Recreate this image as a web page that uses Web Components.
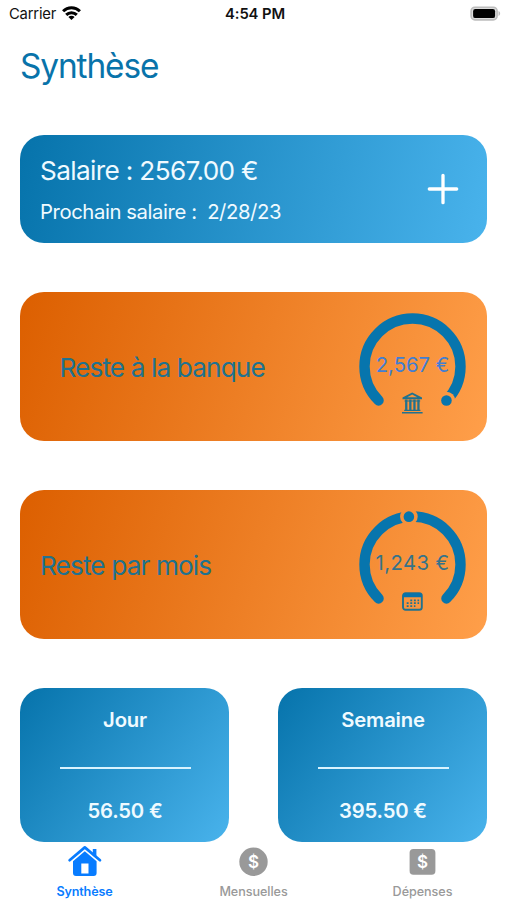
<!DOCTYPE html>
<html lang="fr">
<head>
<meta charset="utf-8">
<title>Synthèse</title>
<style>
  body {
    margin: 0;
    background: #fff;
    font-family: Inter, "Liberation Sans", sans-serif;
  }
</style>
</head>
<body>
<budget-app>
  <status-bar slot="status" carrier="Carrier" time="4:54 PM"></status-bar>
  <salary-card amount="2567.00 €" next="2/28/23"></salary-card>
  <gauge-card label="Reste à la banque" value="2,567 €" rate="1" icon="bank" class="inset"></gauge-card>
  <gauge-card label="Reste par mois" value="1,243 €" rate="0.484" icon="calendar"></gauge-card>
  <div class="pair">
    <amount-card label="Jour">56.50 €</amount-card>
    <amount-card label="Semaine">395.50 €</amount-card>
  </div>
  <tab-item slot="tabs" icon="house" selected>Synthèse</tab-item>
  <tab-item slot="tabs" icon="circle">Mensuelles</tab-item>
  <tab-item slot="tabs" icon="square">Dépenses</tab-item>
</budget-app>

<script>
const createTemplate = (html) => {
  const template = document.createElement('template');
  template.innerHTML = html;
  return template;
};

const render = (el, template) => {
  el.attachShadow({ mode: 'open' });
  el.shadowRoot.appendChild(template.content.cloneNode(true));
};

const appTemplate = createTemplate(`
  <style>
    :host {
      display: flex;
      flex-direction: column;
      box-sizing: border-box;
      width: 507px;
      height: 900px;
      overflow: hidden;
    }
    h1 {
      margin: 19px 0 0 20px;
      height: 41px;
      font-size: 33.4px;
      line-height: 41px;
      font-weight: 400;
      letter-spacing: -1.1px;
      color: #0873aa;
    }
    main {
      display: flex;
      flex-direction: column;
      gap: 49px;
      padding: 48px 20px 0 20px;
    }
    ::slotted(.pair) {
      display: grid;
      grid-template-columns: 1fr 1fr;
      gap: 49px;
    }
    nav {
      display: grid;
      grid-template-columns: repeat(3, 1fr);
      padding-top: 4px;
    }
  </style>
  <slot name="status"></slot>
  <h1>Synthèse</h1>
  <main><slot></slot></main>
  <nav><slot name="tabs"></slot></nav>
`);

class BudgetApp extends HTMLElement {
  constructor() {
    super();
    render(this, appTemplate);
  }
}

const statusTemplate = createTemplate(`
  <style>
    :host {
      display: grid;
      grid-template-columns: 1fr auto 1fr;
      align-items: center;
      height: 27px;
      padding: 0 6px 0 9px;
      box-sizing: border-box;
      font-size: 14.8px;
      color: #111;
    }
    .left {
      display: flex;
      align-items: center;
      gap: 6px;
    }
    .carrier {
      letter-spacing: -0.2px;
    }
    .time {
      font-weight: 600;
      letter-spacing: -0.1px;
    }
    .battery {
      justify-self: end;
    }
    svg {
      display: block;
    }
  </style>
  <div class="left">
    <span class="carrier"></span>
    <svg width="19" height="15" viewBox="0 0 19 15" fill="none" stroke="#000" stroke-width="3">
      <path d="M1.1 5.3a12 12 0 0 1 16.8 0"/>
      <path d="M4.2 8.9a7.5 7.5 0 0 1 10.6 0"/>
      <path d="M9.5 14 6.4 11a4.4 4.4 0 0 1 6.2 0z" fill="#000" stroke="none"/>
    </svg>
  </div>
  <span class="time"></span>
  <svg class="battery" width="31" height="16" viewBox="0 0 31 16">
    <rect x="1.1" y="1.3" width="26" height="12.6" rx="3.8" fill="#ddd" stroke="#bdbdbd" stroke-width="1.6"/>
    <rect x="3.1" y="3.1" width="22" height="9" rx="2.2"/>
    <path d="M28.5 5.1c2.2.8 2.2 4 0 4.8z" fill="#bdbdbd"/>
  </svg>
`);

class StatusBar extends HTMLElement {
  constructor() {
    super();
    render(this, statusTemplate);
  }

  connectedCallback() {
    this.shadowRoot.querySelector('.carrier').textContent = this.getAttribute('carrier');
    this.shadowRoot.querySelector('.time').textContent = this.getAttribute('time');
  }
}

const salaryTemplate = createTemplate(`
  <style>
    :host {
      display: flex;
      align-items: center;
      justify-content: space-between;
      box-sizing: border-box;
      height: 108px;
      padding: 0 28.3px 0 20px;
      border-radius: 24px;
      background: linear-gradient(103deg, #0673ab, #49b3ec);
      color: #effaff;
    }
    .salary {
      font-size: 26.2px;
      line-height: 34px;
      letter-spacing: -0.65px;
    }
    .next {
      margin-top: 11px;
      font-size: 20.3px;
      line-height: 26px;
      letter-spacing: -0.41px;
      white-space: pre;
    }
  </style>
  <div>
    <div class="salary"></div>
    <div class="next"></div>
  </div>
  <svg width="32" height="32" viewBox="0 0 32 32" stroke="#fff" stroke-width="3.3" stroke-linecap="round">
    <path d="M16 2.3v27.4M2.3 16h27.4"/>
  </svg>
`);

class SalaryCard extends HTMLElement {
  constructor() {
    super();
    render(this, salaryTemplate);
  }

  connectedCallback() {
    this.shadowRoot.querySelector('.salary').textContent = `Salaire : ${this.getAttribute('amount')}`;
    this.shadowRoot.querySelector('.next').textContent = `Prochain salaire :  ${this.getAttribute('next')}`;
  }
}

const gaugeIcons = {
  bank: `
    <g transform="translate(43 79.4)" fill="#20728f">
      <path fill-rule="evenodd" d="M10.2 0 20 5v1.8H.5V5zM10.2 2.1 5.2 4.9h10z"/>
      <path d="M2.5 8h15.7v1.2H2.5zM2.2 17.3h16.2v1.3H2.2zM0 19.5h20.6v1.7H0z"/>
      <path d="M3.1 7h2.3v11H3.1zM7.2 7h2.3v11H7.2zM11.3 7h2.3v11h-2.3zM15.3 7h2.3v11h-2.3z"/>
    </g>`,
  calendar: `
    <g transform="translate(43 81.2)">
      <rect x="1" y="1" width="18.8" height="16.6" rx="2.6" fill="none" stroke="#20728f" stroke-width="1.9"/>
      <path d="M1 5V3.2Q1 1 3.2 1h14.4q2.2 0 2.2 2.2V5z" fill="#0873aa"/>
      <path d="M8.3 8.1h8.8M4.7 11h12.4M4.7 13.9h8.7" stroke="#20728f" stroke-width="1.7" stroke-dasharray="1.9 1.7"/>
    </g>`
};

const gaugeTemplate = createTemplate(`
  <style>
    :host {
      display: flex;
      align-items: center;
      justify-content: space-between;
      box-sizing: border-box;
      height: 149px;
      padding: 0 20.7px 0 20px;
      border-radius: 24px;
      background: linear-gradient(107.7deg, #dc5f00, #ff9f4a);
      color: #20728f;
    }
    :host(.inset) {
      padding-left: 39.5px;
    }
    .label {
      padding-top: 1px;
      font-size: 26.2px;
      letter-spacing: -0.88px;
    }
    svg {
      display: block;
    }
    text {
      font-size: 20.3px;
      text-anchor: middle;
      fill: #35738a;
    }
    :host([icon="calendar"]) text {
      letter-spacing: 0.4px;
    }
    :host([icon="bank"]) text {
      fill: #417ed3;
    }
  </style>
  <div class="label"></div>
  <svg width="107" height="107" viewBox="0 0 107 107"></svg>
`);

// The dial sweeps 270 degrees, starting at the lower left.
class GaugeCard extends HTMLElement {
  constructor() {
    super();
    render(this, gaugeTemplate);
  }

  connectedCallback() {
    const angle = (135 + 270 * Number(this.getAttribute('rate'))) * Math.PI / 180;
    const x = 53.5 + 48 * Math.cos(angle);
    const y = 53.5 + 48 * Math.sin(angle);

    this.shadowRoot.querySelector('.label').textContent = this.getAttribute('label');
    this.shadowRoot.querySelector('svg').innerHTML = `
      <mask id="gap">
        <rect width="107" height="107" fill="#fff"/>
        <circle cx="${x}" cy="${y}" r="8.8"/>
      </mask>
      <path d="M19.56 87.44A48 48 0 1 1 87.44 87.44" fill="none" stroke="#0775ad"
        stroke-width="10.4" stroke-linecap="round" mask="url(#gap)"/>
      <circle cx="${x}" cy="${y}" r="5.3" fill="#0775ad"/>
      <text x="53.5" y="58.5">${this.getAttribute('value')}</text>
      ${gaugeIcons[this.getAttribute('icon')]}
    `;
  }
}

const amountTemplate = createTemplate(`
  <style>
    :host {
      display: flex;
      flex-direction: column;
      align-items: center;
      box-sizing: border-box;
      height: 154px;
      padding: 19px 0 0 1px;
      border-radius: 24px;
      background: linear-gradient(126.4deg, #0673ab, #49b3ec);
      color: #effaff;
      font-size: 20.3px;
      line-height: 26px;
      font-weight: 600;
      letter-spacing: -0.2px;
    }
    hr {
      width: 131px;
      height: 2px;
      margin: 34px 0 29px;
      border: 0;
      background: #d9f3ff;
    }
  </style>
  <div class="label"></div>
  <hr>
  <div><slot></slot></div>
`);

class AmountCard extends HTMLElement {
  constructor() {
    super();
    render(this, amountTemplate);
  }

  connectedCallback() {
    this.shadowRoot.querySelector('.label').textContent = this.getAttribute('label');
  }
}

const tabIcons = {
  house: `
    <path d="M2.6 14.2 17.8 1.4 33 14.2" fill="none" stroke="currentColor" stroke-width="2.7" stroke-linecap="round" stroke-linejoin="round"/>
    <path d="M25.8 2.9h3.6v9.5l-3.6-3z" fill="currentColor"/>
    <path fill="currentColor" fill-rule="evenodd" d="M17.8 5.2 29.6 15.2v11.8q0 3-3 3H9q-3 0-3-3V15.2zM14.3 17.5v10h7.2v-10z"/>`,
  circle: `
    <circle cx="17.5" cy="15.8" r="14.2" fill="currentColor"/>
    <text x="17.5" y="21.9">$</text>`,
  square: `
    <rect x="4.6" y="3" width="25.8" height="25.8" rx="3.8" fill="currentColor"/>
    <text x="17.5" y="21.9">$</text>`
};

const tabTemplate = createTemplate(`
  <style>
    :host {
      display: flex;
      flex-direction: column;
      align-items: center;
      color: #999;
      font-size: 12.6px;
      line-height: 16px;
      font-weight: 500;
      letter-spacing: -0.05px;
    }
    :host([selected]) {
      color: #087cff;
      font-weight: 600;
      letter-spacing: -0.15px;
    }
    svg {
      display: block;
      margin-bottom: 6px;
      overflow: visible;
    }
    text {
      fill: #fff;
      font-size: 17px;
      font-weight: 600;
      letter-spacing: 0;
      text-anchor: middle;
    }
  </style>
  <svg width="35" height="32" viewBox="0 0 35 32"></svg>
  <div><slot></slot></div>
`);

class TabItem extends HTMLElement {
  constructor() {
    super();
    render(this, tabTemplate);
  }

  connectedCallback() {
    this.shadowRoot.querySelector('svg').innerHTML = tabIcons[this.getAttribute('icon')];
  }
}

window.customElements.define('budget-app', BudgetApp);
window.customElements.define('status-bar', StatusBar);
window.customElements.define('salary-card', SalaryCard);
window.customElements.define('gauge-card', GaugeCard);
window.customElements.define('amount-card', AmountCard);
window.customElements.define('tab-item', TabItem);
</script>
</body>
</html>
